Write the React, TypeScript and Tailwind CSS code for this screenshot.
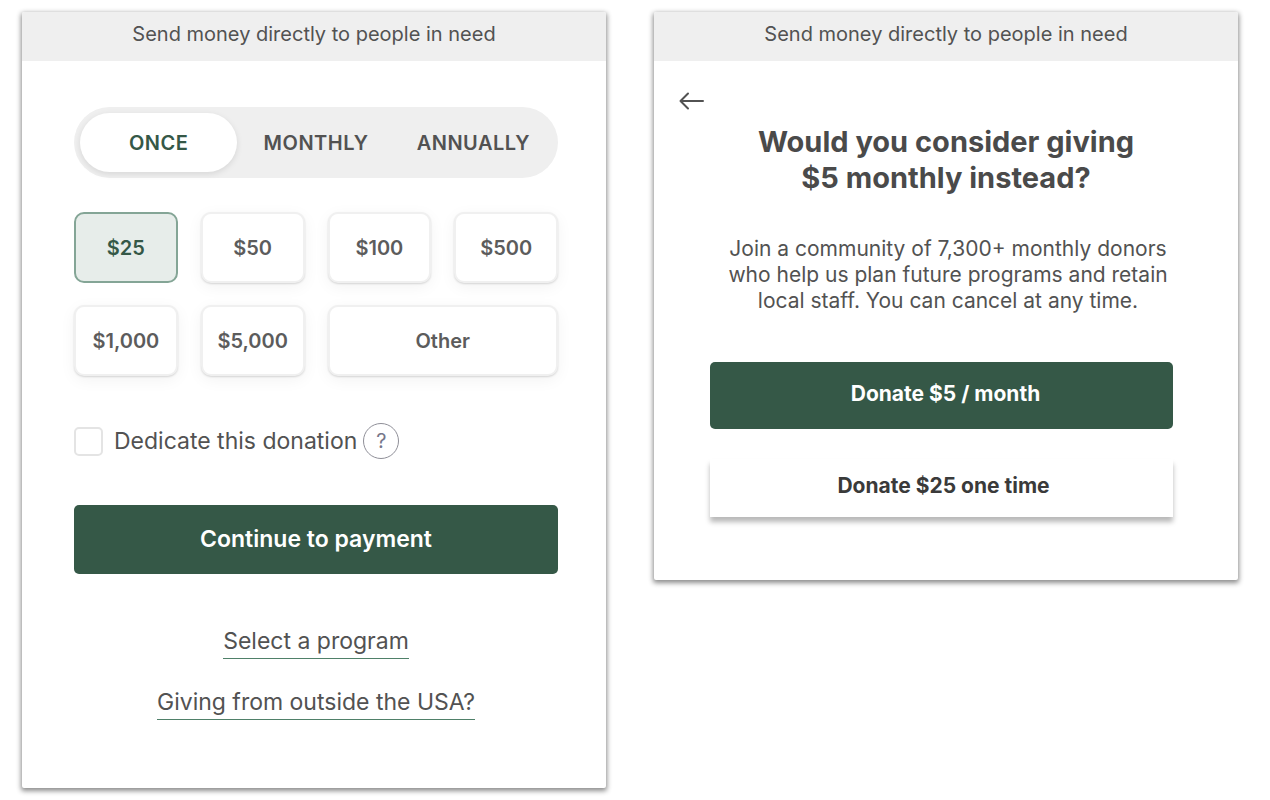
import { useState, type ReactNode } from "react";
import clsx from "clsx";

const FREQUENCIES = ["Once", "Monthly", "Annually"];

const AMOUNTS = ["$25", "$50", "$100", "$500", "$1,000", "$5,000", "Other"];

// White card with the grey banner that every step of the form shares
const DonationCard = ({ children }: { children: ReactNode }) => {
  return (
    <section className="rounded-[2px] bg-white shadow-[0_2px_5px_1px_rgba(0,0,0,0.45)]">
      <header className="rounded-t-[2px] bg-[#efefef] pt-2 pb-3 text-center text-[20px] leading-[29px]">
        Send money directly to people in need
      </header>
      {children}
    </section>
  );
};

const FrequencyTabs = () => {
  const [selected, setSelected] = useState("Once");

  return (
    <div className="grid grid-cols-3 rounded-full bg-[#efefef] p-[6px]">
      {FREQUENCIES.map((frequency) => (
        <button
          key={frequency}
          type="button"
          aria-pressed={frequency === selected}
          onClick={() => setSelected(frequency)}
          className={clsx(
            "h-[59px] rounded-full text-[20px] font-semibold tracking-wide uppercase",
            frequency === selected &&
              "bg-white text-[#355847] shadow-[0_2px_6px_rgba(0,0,0,0.1)]"
          )}
        >
          {frequency}
        </button>
      ))}
    </div>
  );
};

const AmountGrid = () => {
  const [selected, setSelected] = useState("$25");

  return (
    <div className="mt-[34px] grid grid-cols-4 gap-x-[23px] gap-y-[22px]">
      {AMOUNTS.map((amount) => (
        <button
          key={amount}
          type="button"
          aria-pressed={amount === selected}
          onClick={() => setSelected(amount)}
          className={clsx(
            "h-[71px] rounded-[10px] text-[20px] font-semibold",
            amount === "Other" && "col-span-2",
            amount === selected
              ? "border-2 border-[#84a596] bg-[#e7edea] text-[#355847]"
              : "border-2 border-[#f0f0f0] bg-white text-[#5c5c5c] shadow-[0_1px_2px_rgba(0,0,0,0.14),0_4px_16px_rgba(0,0,0,0.05)]"
          )}
        >
          {amount}
        </button>
      ))}
    </div>
  );
};

const DonateStep = () => {
  return (
    <DonationCard>
      <form className="pt-[46px] pr-12 pb-[68px] pl-[52px]">
        <FrequencyTabs />
        <AmountGrid />

        <div className="mt-[47px] flex h-9 items-center">
          <input
            id="dedicate"
            type="checkbox"
            className="size-[29px] appearance-none rounded-[5px] border-2 border-[#e4e4e4] checked:bg-[#355847]"
          />
          <label htmlFor="dedicate" className="ml-[11px] text-[23px]">
            Dedicate this donation
          </label>
          <button
            type="button"
            aria-label="About dedications"
            className="ml-[6px] size-9 rounded-full border border-[#8f8f98] text-[20px] leading-none text-[#77778a]"
          >
            ?
          </button>
        </div>

        <button
          type="button"
          className="mt-[46px] h-[69px] w-full rounded-[5px] bg-[#355847] text-[23px] font-semibold text-white"
        >
          Continue to payment
        </button>

        <nav className="mt-[51px] flex flex-col items-center gap-[27px] text-[23px] leading-[33px]">
          <a href="#programs" className="border-b border-[#4f8069]">
            Select a program
          </a>
          <a href="#international" className="border-b border-[#4f8069]">
            Giving from outside the USA?
          </a>
        </nav>
      </form>
    </DonationCard>
  );
};

const BackArrow = () => {
  return (
    <svg
      viewBox="0 0 26 18"
      className="h-[18px] w-[26px]"
      fill="none"
      stroke="currentColor"
      strokeWidth="2"
      strokeLinecap="round"
      strokeLinejoin="round"
    >
      <path d="M24 9H1.5M9 1.5 1.5 9 9 16.5" />
    </svg>
  );
};

const UpsellStep = () => {
  return (
    <DonationCard>
      <div className="pt-[31px] pb-[63px] text-center">
        <button type="button" aria-label="Back" className="ml-[25px] block">
          <BackArrow />
        </button>

        <h2 className="mt-[14px] text-[29px] leading-9 font-bold text-[#4a4a4a]">
          Would you consider giving
          <br />
          $5 monthly instead?
        </h2>

        <p className="mt-10 pl-1 text-[21px] leading-[26px]">
          Join a community of 7,300+ monthly donors
          <br />
          who help us plan future programs and retain
          <br />
          local staff. You can cancel at any time.
        </p>

        <div className="mt-12 flex flex-col gap-[30px] pr-[65px] pl-14 text-[21px] font-bold">
          <button
            type="button"
            className="h-[67px] rounded-[5px] bg-[#355847] pb-1 pl-2 text-white"
          >
            Donate $5 / month
          </button>
          <button
            type="button"
            className="h-[58px] bg-white pb-1 pl-1 text-[#3a3a3a] shadow-[0_5px_5px_rgba(0,0,0,0.28)]"
          >
            Donate $25 one time
          </button>
        </div>
      </div>
    </DonationCard>
  );
};

const App = () => {
  return (
    <main className="grid min-h-screen grid-cols-2 items-start gap-12 bg-white pt-3 pr-8 pb-3 pl-[22px] font-[Inter,sans-serif] text-[#525252]">
      <DonateStep />
      <UpsellStep />
    </main>
  );
};

export default App;
